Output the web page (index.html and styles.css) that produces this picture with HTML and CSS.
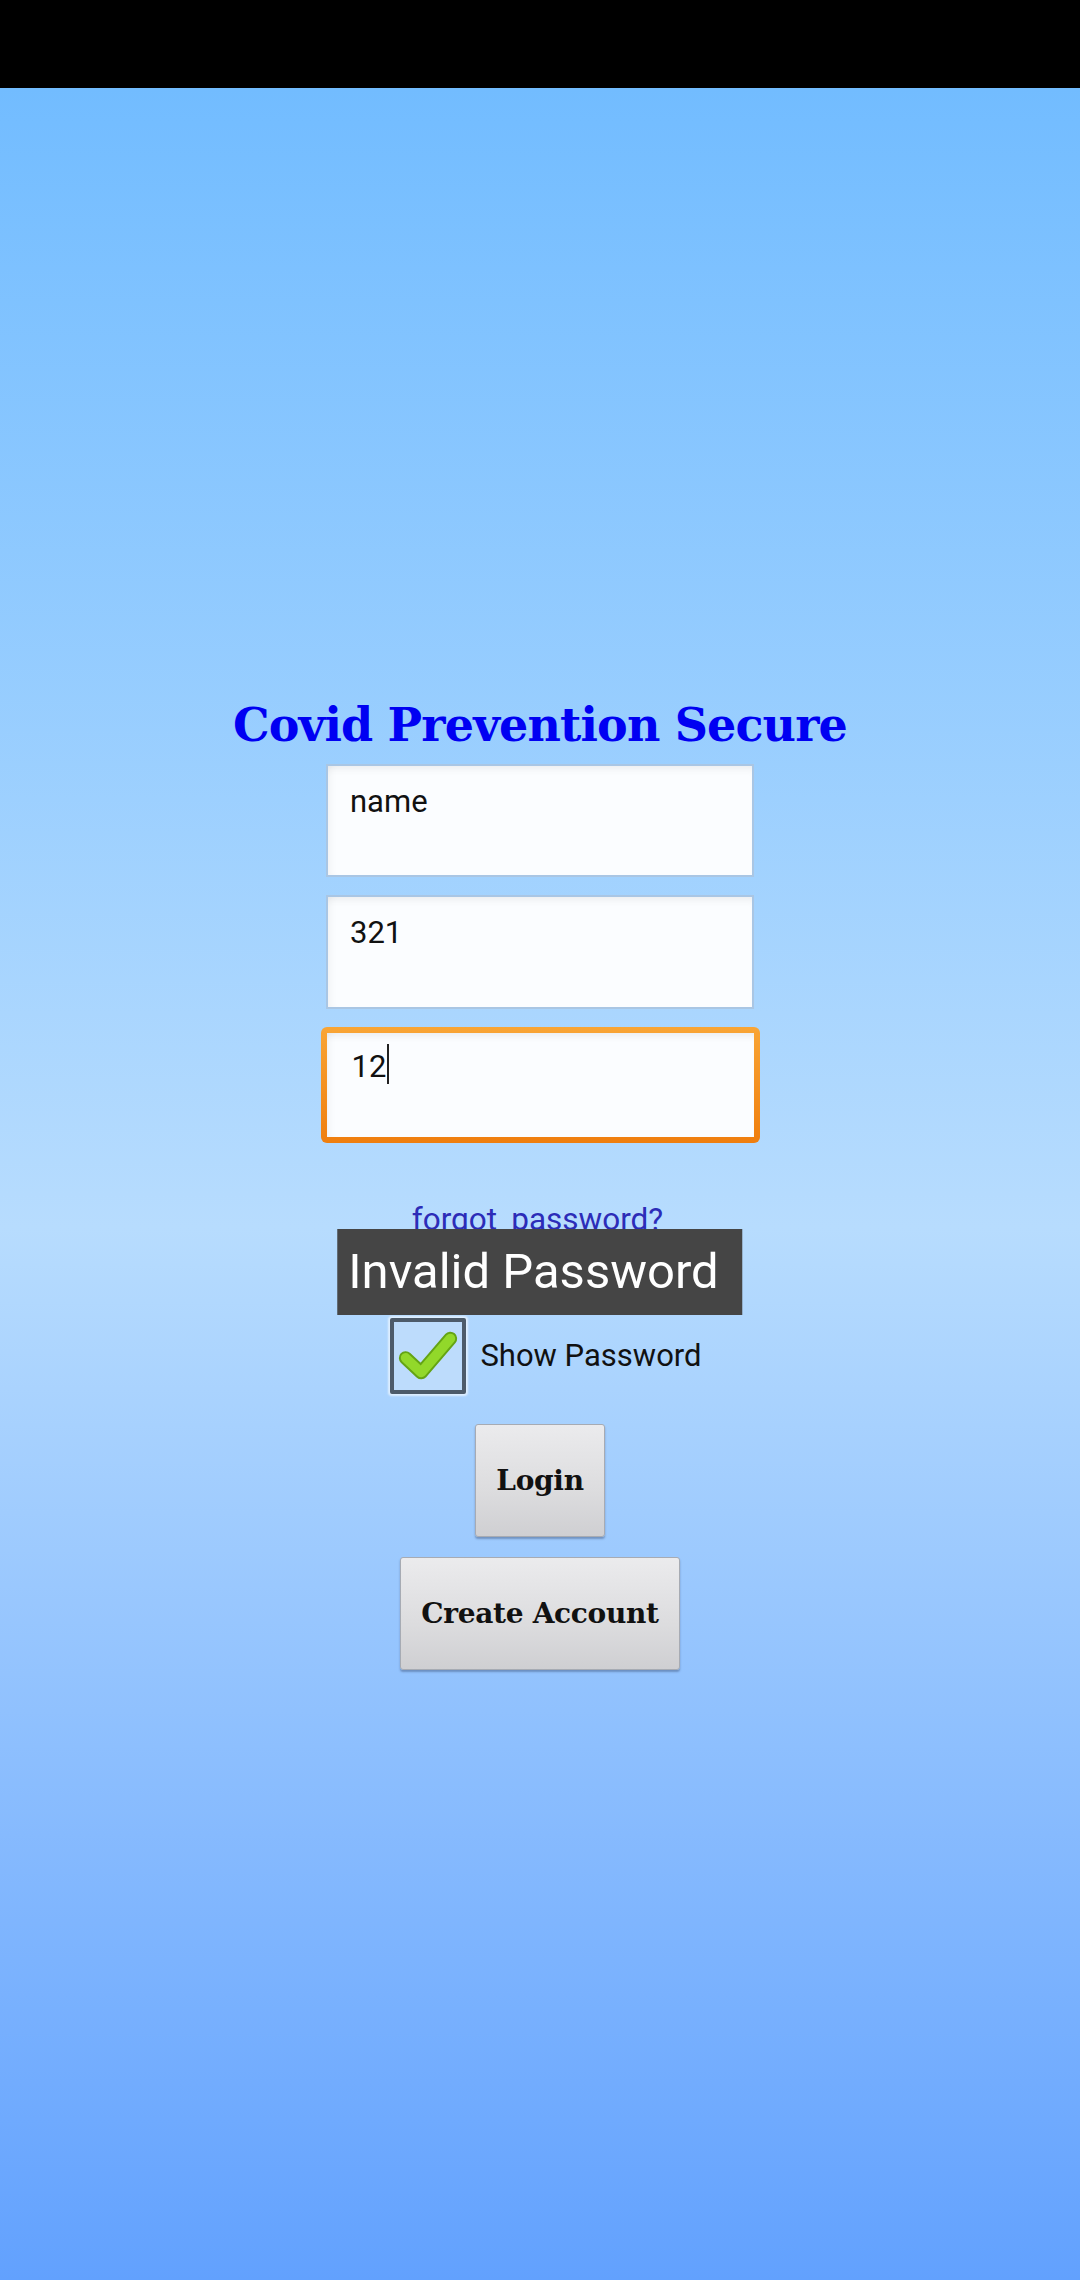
FILE: index.html
```html
<!DOCTYPE html>
<html>
<head>
<meta charset="utf-8">
<link rel="stylesheet" href="styles.css">
</head>
<body>
<div class="status-bar"></div>
<main class="screen">
  <h1 class="title">Covid Prevention Secure</h1>
  <div class="fields">
    <div class="field">name</div>
    <div class="field field-mid">321</div>
    <div class="field focused">12<span class="caret"></span></div>
  </div>
  <div class="forgot">forgot_password?</div>
  <div class="check-row">
    <span class="checkbox">
      <svg width="70" height="70" viewBox="0 0 70 70">
        <polyline points="17,42 33,57 63,22" transform="translate(-5,-5)" fill="none" stroke="#64a414" stroke-width="14" stroke-linecap="round" stroke-linejoin="round"/>
        <polyline points="17,42 33,57 63,22" transform="translate(-5,-5)" fill="none" stroke="#92d82a" stroke-width="10" stroke-linecap="round" stroke-linejoin="round"/>
      </svg>
    </span>
    <span class="check-label">Show Password</span>
  </div>
  <div class="buttons">
    <button class="btn">Login</button>
    <button class="btn">Create Account</button>
  </div>
  <div class="toast">Invalid Password</div>
</main>
</body>
</html>
```
FILE: styles.css
```css
html, body {
  margin: 0;
  padding: 0;
}
body {
  width: 1080px;
  height: 2280px;
  overflow: hidden;
  background: #000;
  font-family: Roboto, "Liberation Sans", sans-serif;
}
.status-bar {
  height: 88px;
  background: #000;
}
.screen {
  position: relative;
  height: 2192px;
  background: linear-gradient(to bottom, #72bcff 0%, #b7dcfe 52%, #62a1fe 100%);
  display: flex;
  flex-direction: column;
  align-items: center;
  padding-top: 609px;
  box-sizing: border-box;
}
.title {
  margin: 0;
  font-family: "DejaVu Serif", "Liberation Serif", serif;
  font-weight: bold;
  font-size: 46px;
  letter-spacing: -0.85px;
  line-height: 56px;
  color: #0000f2;
  white-space: nowrap;
}
.fields {
  margin-top: 11px;
  display: flex;
  flex-direction: column;
  align-items: center;
  gap: 18px;
}
.field {
  box-sizing: border-box;
  width: 428px;
  height: 113px;
  border: 2px solid #a9c6e4;
  background: #fbfdff;
  box-shadow: inset 0 8px 8px -6px rgba(0, 0, 0, 0.08), inset 8px 0 8px -6px rgba(0, 0, 0, 0.05);
  padding: 18px 22px 0;
  font-size: 31px;
  line-height: 36px;
  color: #111;
}
.field-mid {
  height: 114px;
}
.focused {
  width: 439px;
  height: 116px;
  border: 6px solid transparent;
  border-radius: 6px;
  padding: 11px 25px 0;
  background:
    linear-gradient(#fbfdff, #fbfdff) padding-box,
    linear-gradient(to bottom, #f9a535, #ef7e0e) border-box;
}
.caret {
  display: inline-block;
  width: 2px;
  height: 40px;
  background: #222;
  margin-left: 1px;
  vertical-align: -7px;
}
.forgot {
  margin-top: 59px;
  padding-right: 5px;
  font-size: 31.5px;
  line-height: 36px;
  color: #2c2cb8;
}
.check-row {
  margin-top: 78px;
  display: flex;
  align-items: center;
  gap: 12px;
  padding-left: 10px;
}
.checkbox {
  box-sizing: border-box;
  width: 76px;
  height: 76px;
  margin: 2px;
  border: 4px solid #4d5b6a;
  border-radius: 2px;
  background: #bddcfc;
  box-shadow: 0 0 2px 2px rgba(235, 245, 255, 0.8);
  display: flex;
  align-items: center;
  justify-content: center;
}
.check-label {
  font-size: 31px;
  line-height: 36px;
  color: #111;
}
.buttons {
  margin-top: 28px;
  display: flex;
  flex-direction: column;
  align-items: center;
  gap: 20px;
}
.btn {
  box-sizing: border-box;
  height: 113px;
  padding: 0 20px;
  border: 1px solid #a7abb3;
  border-radius: 3px;
  background: linear-gradient(to bottom, #ebebed 0%, #dcdcde 60%, #cfcfd2 100%);
  box-shadow: 0 2px 2px rgba(60, 80, 120, 0.45);
  font-family: "DejaVu Serif", "Liberation Serif", serif;
  font-weight: bold;
  font-size: 28px;
  letter-spacing: -0.3px;
  color: #111;
}
.toast {
  position: absolute;
  top: 1141px;
  left: 50%;
  transform: translateX(-50%);
  height: 86px;
  box-sizing: border-box;
  padding: 0 24px 0 11px;
  background: #454545;
  color: #fff;
  font-size: 49px;
  line-height: 86px;
  white-space: nowrap;
}
```
